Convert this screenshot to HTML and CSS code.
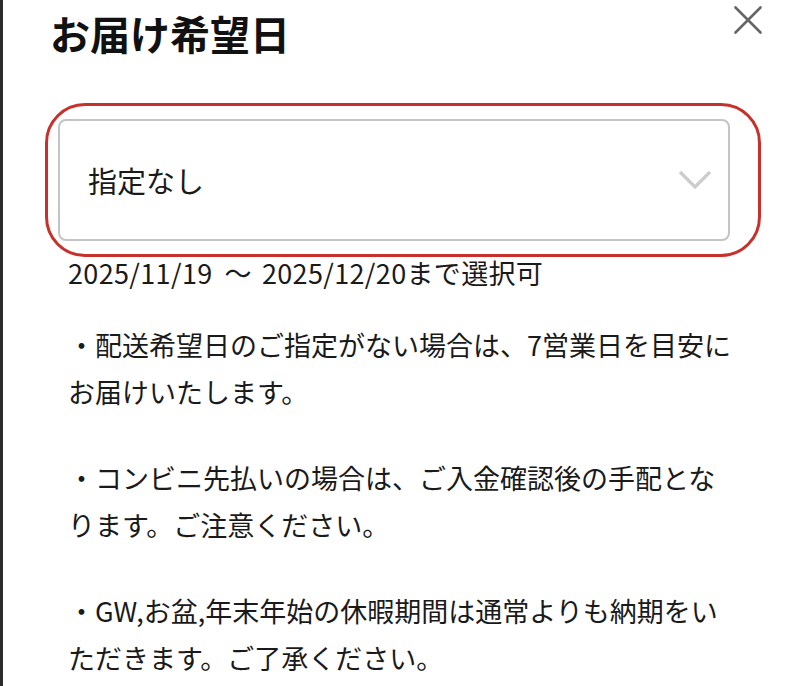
FILE: index.html
```html
<!DOCTYPE html>
<html lang="ja">
<head>
    <meta charset="UTF-8">
    <meta name="viewport" content="width=device-width, initial-scale=1.0">
    <title>お届け希望日</title>
    <link rel="stylesheet" href="styles.css">
</head>
<body>
    <div class="modal">
        <div class="modal-header">
            <h1 class="modal-title">お届け希望日</h1>
            <button class="close-btn" aria-label="閉じる">
                <svg width="28" height="28" viewBox="0 0 28 28">
                    <path d="M1.5 1.5 L26.5 26.5 M26.5 1.5 L1.5 26.5" stroke="#666" stroke-width="2.6" stroke-linecap="round" fill="none"/>
                </svg>
            </button>
        </div>

        <!-- Date select (highlighted) -->
        <div class="select-wrap">
            <div class="date-select">
                <span>指定なし</span>
                <svg class="chevron" width="34" height="20" viewBox="0 0 34 20">
                    <polyline points="2,2 17,17 32,2" stroke="#cccccc" stroke-width="3.2" fill="none"/>
                </svg>
            </div>
        </div>

        <p class="range">2025/11/19<span class="tilde">〜</span>2025/12/20まで選択可</p>

        <div class="notes">
            <p>・配送希望日のご指定がない場合は、7営業日を目安にお届けいたします。</p>
            <p>・コンビニ先払いの場合は、ご入金確認後の手配となります。ご注意ください。</p>
            <p>・GW,お盆,年末年始の休暇期間は通常よりも納期をいただきます。ご了承ください。</p>
        </div>
    </div>
</body>
</html>
```

FILE: styles.css
```css
html, body {
    height: 686px;
    overflow: hidden;
}

body {
    margin: 0;
    background: #fff;
    font-family: "Noto Sans CJK JP", "Noto Sans", sans-serif;
    color: #1a1a1a;
}

.modal {
    border-left: 3px solid #2b2b2b;
    height: 686px;
    box-sizing: border-box;
    padding: 9px 38px 0 47px;
    overflow: hidden;
}

.modal-header {
    display: flex;
    justify-content: space-between;
    align-items: flex-start;
}

.modal-title {
    margin: 0;
    font-size: 40px;
    line-height: 48px;
    font-weight: 700;
    color: #111;
}

.close-btn {
    border: none;
    background: none;
    padding: 0;
    margin-top: -3px;
    width: 28px;
    height: 28px;
    cursor: pointer;
}

.close-btn svg {
    display: block;
}

.select-wrap {
    position: relative;
    margin: 62px 0 0 8px;
    width: 672px;
}

/* red highlight ring */
.select-wrap::after {
    content: "";
    position: absolute;
    top: -16px;
    bottom: -16px;
    left: -13px;
    right: -31px;
    border: 3px solid #c8302b;
    border-radius: 40px;
    pointer-events: none;
}

.date-select {
    height: 122px;
    box-sizing: border-box;
    border: 2px solid #c4c4c4;
    border-radius: 8px;
    display: flex;
    align-items: center;
    justify-content: space-between;
    padding: 0 16px 0 28px;
    font-size: 29px;
    color: #1a1a1a;
}

.chevron {
    display: block;
}

.range {
    margin: 14px 0 0 18px;
    font-size: 27px;
    line-height: 36px;
    letter-spacing: 0.35px;
}

.range .tilde {
    margin: 0 10px 0 12px;
}

.notes {
    margin: 31px 0 0 18px;
    width: 668px;
}

.notes p {
    margin: 0 0 40px;
    font-size: 27px;
    line-height: 46.5px;
}
```
